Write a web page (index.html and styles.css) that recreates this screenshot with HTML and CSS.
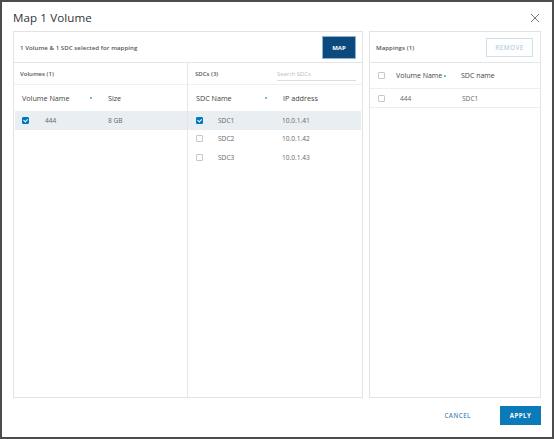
FILE: index.html
```html
<!DOCTYPE html>
<html>
<head>
<meta charset="utf-8">
<link rel="stylesheet" href="styles.css">
</head>
<body>
<div class="dialog">
  <div class="title-bar">
    <h1 class="title">Map 1 Volume</h1>
    <svg class="close" width="10" height="10" viewBox="0 0 10 10"><path d="M1 1L9 9M9 1L1 9" stroke="#777" stroke-width="1" fill="none"/></svg>
  </div>
  <div class="body">
    <div class="panel left">
      <div class="panel-head">
        <span class="head-text">1 Volume &amp; 1 SDC selected for mapping</span>
        <button class="btn-map">MAP</button>
      </div>
      <div class="cols">
        <div class="col vol">
          <div class="sub-head"><span>Volumes (1)</span></div>
          <div class="row hdr">
            <span class="c-name">Volume Name</span><span class="dot"></span><span class="c-size">Size</span>
          </div>
          <div class="row data sel">
            <span class="cb on"></span><span class="c-val">444</span><span class="c-size2">8 GB</span>
          </div>
        </div>
        <div class="col sdc">
          <div class="sub-head"><span>SDCs (3)</span><span class="search">Search SDCs</span></div>
          <div class="row hdr">
            <span class="s-name">SDC Name</span><span class="dot"></span><span class="s-ip">IP address</span>
          </div>
          <div class="row data sel">
            <span class="cb on"></span><span class="s-val">SDC1</span><span class="s-ipv">10.0.1.41</span>
          </div>
          <div class="row data">
            <span class="cb"></span><span class="s-val">SDC2</span><span class="s-ipv">10.0.1.42</span>
          </div>
          <div class="row data">
            <span class="cb"></span><span class="s-val">SDC3</span><span class="s-ipv">10.0.1.43</span>
          </div>
        </div>
      </div>
    </div>
    <div class="panel right">
      <div class="panel-head">
        <span class="head-text">Mappings (1)</span>
        <button class="btn-remove">REMOVE</button>
      </div>
      <div class="row mhdr">
        <span class="cb"></span><span class="m-name">Volume Name</span><span class="dot"></span><span class="m-sdc">SDC name</span>
      </div>
      <div class="row mdata">
        <span class="cb"></span><span class="m-val">444</span><span class="m-sdcv">SDC1</span>
      </div>
    </div>
  </div>
  <div class="footer">
    <button class="btn-cancel">CANCEL</button>
    <button class="btn-apply">APPLY</button>
  </div>
</div>
</body>
</html>
```
FILE: styles.css
```css
* { box-sizing: border-box; }
html, body { margin: 0; padding: 0; background: #fff; }
body { font-family: "Open Sans", "Liberation Sans", sans-serif; color: #444; }
.dialog {
  width: 554px; height: 439px;
  border: 2px solid #4c4c4c;
  background: #fff;
  display: flex; flex-direction: column;
  padding: 0 11px 0 11px;
}
.title-bar { height: 29px; display: flex; align-items: center; justify-content: space-between; }
.title { margin: 0; font-size: 11.6px; font-weight: 400; color: #333; letter-spacing: 0.1px; padding-top: 2px; }
.close { margin-right: 1px; margin-top: 2px; }
.body { display: flex; gap: 6px; height: 367px; }
.panel { border: 1px solid #e3e3e3; display: flex; flex-direction: column; }
.left { width: 350px; }
.right { width: 172px; }
.panel-head {
  height: 31px; display: flex; align-items: center; justify-content: space-between;
  border-bottom: 1px solid #e6e6e6; padding: 0 6px 0 6px; flex: none;
}
.head-text { font-size: 6.1px; font-weight: 600; color: #555; letter-spacing: 0.05px; }
.btn-map {
  width: 34px; height: 23px; border: 1px solid #8ab4d6; outline: none;
  background: #0c4a7e; color: #fff; font-family: inherit; font-size: 6px; font-weight: 700;
  padding: 0; box-shadow: inset 0 0 0 1px #0c4a7e; margin-top: 1px;
}
.btn-remove {
  width: 47px; height: 19px; border: 1px solid #c9e2ec; background: #fff;
  color: #b6d3e2; font-family: inherit; font-size: 6.3px; font-weight: 600; letter-spacing: 0.5px;
  padding: 0; margin-right: 1px;
}
.cols { display: flex; flex: 1; }
.col { display: flex; flex-direction: column; }
.vol { width: 174px; border-right: 1px solid #e6e6e6; }
.sdc { flex: 1; }
.sub-head {
  height: 22px; display: flex; align-items: center; justify-content: space-between;
  padding: 0 6px 0 6px; border-bottom: 1px solid #f0f0f0; font-size: 6px; font-weight: 600; color: #555;
}
.sdc .sub-head { padding-left: 7px; }
.search {
  width: 79px; font-weight: 400; color: #bbb; font-size: 5.8px;
  border-bottom: 1px solid #ddd; padding-bottom: 2px; margin-top: 3px; margin-right: 0;
}
.row { display: flex; align-items: center; font-size: 6.6px; color: #666; }
.hdr { height: 26px; font-size: 7.2px; color: #444; }
.data { height: 18.5px; }
.sel { background: #e9eef3; }
.vol .row { padding-left: 8px; }
.vol .sel { margin-left: 1px; padding-left: 7px; }
.sdc .row { padding-left: 8px; }
.sdc .sel { margin-right: 1px; }
.c-name { width: 68px; }
.dot { width: 2px; height: 2px; border-radius: 1px; background: #3ca8c9; flex: none; }
.c-size { margin-left: 16px; }
.cb { width: 7px; height: 7px; border: 1px solid #c8c8c8; border-radius: 1px; background: #fff; flex: none; position: relative; }
.cb.on { background: #0079b8; border-color: #0079b8; }
.cb.on::after {
  content: ""; position: absolute; left: 1.3px; top: 0.3px; width: 2px; height: 3.4px;
  border: solid #fff; border-width: 0 1px 1px 0; transform: rotate(45deg);
}
.c-val { margin-left: 16px; width: 63px; }
.s-name { width: 69px; }
.s-ip { margin-left: 16px; }
.s-val { margin-left: 15px; width: 64px; }
.right .row { padding-left: 8px; border-bottom: 1px solid #eee; }
.mhdr { height: 26px; font-size: 7px; color: #444; }
.mdata { height: 19px; }
.m-name { margin-left: 11px; width: 48px; }
.m-sdc { margin-left: 15px; }
.m-val { margin-left: 15px; width: 62px; }
.footer { flex: 1; display: flex; align-items: center; justify-content: flex-end; padding-bottom: 5px; }
.btn-cancel {
  border: none; background: none; color: #4a90bd; font-family: inherit; font-size: 6.2px; font-weight: 600;
  letter-spacing: 0.5px; padding: 0; margin-right: 29px;
}
.btn-apply {
  width: 41px; height: 19px; border: none; background: #0a7bb8; color: #fff;
  font-family: inherit; font-size: 6.2px; font-weight: 700; letter-spacing: 0.4px; padding: 0;
}
```
